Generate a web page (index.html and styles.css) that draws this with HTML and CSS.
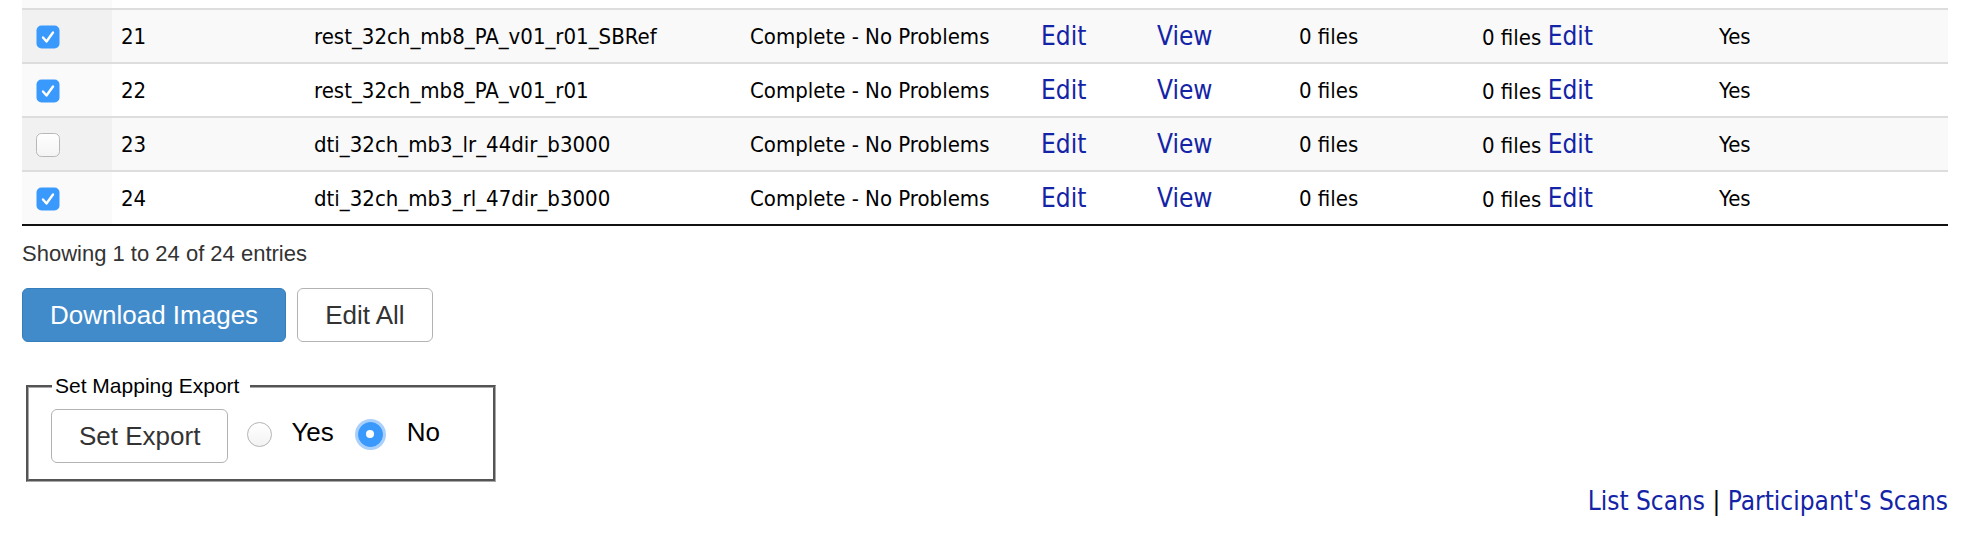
FILE: index.html
```html
<!DOCTYPE html>
<html>
<head>
<meta charset="utf-8">
<link rel="stylesheet" href="styles.css">
</head>
<body>
<div class="page">
  <table class="scans">
    <colgroup>
      <col class="c-check"><col class="c-num"><col class="c-name"><col class="c-status"><col class="c-edit"><col class="c-view"><col class="c-files"><col class="c-files2"><col class="c-yes">
    </colgroup>
    <tbody>
      <tr class="cut even"><td class="sorted"></td><td></td><td></td><td></td><td></td><td></td><td></td><td></td><td></td></tr>
      <tr class="odd">
        <td class="sorted"><span class="cb on"><svg viewBox="0 0 24 24" width="24" height="24"><rect x="0.5" y="0.5" width="23" height="23" rx="5" fill="#3a99fc"/><path d="M7 12.5 L10.5 16.5 L17 7.5" fill="none" stroke="#fff" stroke-width="2.4" stroke-linecap="round" stroke-linejoin="round"/></svg></span></td>
        <td>21</td><td>rest_32ch_mb8_PA_v01_r01_SBRef</td><td>Complete - No Problems</td>
        <td><a class="lnk" href="#">Edit</a></td><td><a class="lnk" href="#">View</a></td>
        <td>0 files</td><td>0 files <a class="lnk" href="#">Edit</a></td><td>Yes</td>
      </tr>
      <tr class="even">
        <td class="sorted"><span class="cb on"><svg viewBox="0 0 24 24" width="24" height="24"><rect x="0.5" y="0.5" width="23" height="23" rx="5" fill="#3a99fc"/><path d="M7 12.5 L10.5 16.5 L17 7.5" fill="none" stroke="#fff" stroke-width="2.4" stroke-linecap="round" stroke-linejoin="round"/></svg></span></td>
        <td>22</td><td>rest_32ch_mb8_PA_v01_r01</td><td>Complete - No Problems</td>
        <td><a class="lnk" href="#">Edit</a></td><td><a class="lnk" href="#">View</a></td>
        <td>0 files</td><td>0 files <a class="lnk" href="#">Edit</a></td><td>Yes</td>
      </tr>
      <tr class="odd">
        <td class="sorted"><span class="cb"><svg viewBox="0 0 24 24" width="24" height="24"><defs><linearGradient id="cbg" x1="0" y1="0" x2="0" y2="1"><stop offset="0" stop-color="#ffffff"/><stop offset="1" stop-color="#f4f4f4"/></linearGradient></defs><rect x="0.5" y="0.5" width="23" height="23" rx="5" fill="url(#cbg)" stroke="#b8b8b8" stroke-width="1"/></svg></span></td>
        <td>23</td><td>dti_32ch_mb3_lr_44dir_b3000</td><td>Complete - No Problems</td>
        <td><a class="lnk" href="#">Edit</a></td><td><a class="lnk" href="#">View</a></td>
        <td>0 files</td><td>0 files <a class="lnk" href="#">Edit</a></td><td>Yes</td>
      </tr>
      <tr class="even last">
        <td class="sorted"><span class="cb on"><svg viewBox="0 0 24 24" width="24" height="24"><rect x="0.5" y="0.5" width="23" height="23" rx="5" fill="#3a99fc"/><path d="M7 12.5 L10.5 16.5 L17 7.5" fill="none" stroke="#fff" stroke-width="2.4" stroke-linecap="round" stroke-linejoin="round"/></svg></span></td>
        <td>24</td><td>dti_32ch_mb3_rl_47dir_b3000</td><td>Complete - No Problems</td>
        <td><a class="lnk" href="#">Edit</a></td><td><a class="lnk" href="#">View</a></td>
        <td>0 files</td><td>0 files <a class="lnk" href="#">Edit</a></td><td>Yes</td>
      </tr>
    </tbody>
  </table>

  <div class="info">Showing 1 to 24 of 24 entries</div>

  <div class="actions">
    <button class="btn btn-primary" type="button">Download Images</button>
    <button class="btn" type="button">Edit All</button>
  </div>

  <fieldset class="mapping">
    <legend>Set Mapping Export</legend>
    <div class="mapping-row">
      <button class="btn" type="button">Set Export</button>
      <span class="radio"></span><span class="opt">Yes</span>
      <span class="radio on"><span class="dot"></span></span><span class="opt opt-no">No</span>
    </div>
  </fieldset>

  <div class="footer-links"><a class="lnk" href="#">List Scans</a> <span class="sep">|</span> <a class="lnk" href="#">Participant's Scans</a></div>
</div>
</body>
</html>
```
FILE: styles.css
```css
html, body { margin: 0; padding: 0; background: #fff; }
.page { padding-left: 22px; width: 1926px; }

.scans {
  width: 1926px;
  table-layout: fixed;
  border-collapse: separate;
  border-spacing: 0;
  border-bottom: 2px solid #111;
  font-family: "DejaVu Sans Condensed", "DejaVu Sans", sans-serif;
  font-stretch: condensed;
  font-size: 22px;
  color: #000;
}
.c-check { width: 90px; }
.c-num { width: 193px; }
.c-name { width: 436px; }
.c-status { width: 291px; }
.c-edit { width: 116px; }
.c-view { width: 142px; }
.c-files { width: 183px; }
.c-files2 { width: 237px; }
.c-yes { width: 238px; }

.scans td {
  height: 52px;
  padding: 0 0 0 9px;
  border-top: 2px solid #ddd;
  vertical-align: middle;
  white-space: nowrap;
  box-sizing: content-box;
}
.scans tr.cut td { height: 8px; border-top: 0; }
.scans tr.odd td { background: #f9f9f9; }
.scans tr.odd td.sorted { background: #f1f1f1; }
.scans tr.even td { background: #fff; }
.scans tr.even td.sorted { background: #fafafa; }
.scans td.sorted { padding-left: 14px; }

.cb { display: inline-block; width: 24px; height: 24px; vertical-align: middle; }
.cb svg { display: block; }

.lnk { color: #1424a6; text-decoration: none; font-size: 26px; }

.info {
  margin-top: 13px;
  font-family: "Liberation Sans", Arial, sans-serif;
  font-size: 22px;
  line-height: 30px;
  color: #333;
}

.actions { margin-top: 19px; display: flex; gap: 11px; }

.btn {
  font-family: "Liberation Sans", Arial, sans-serif;
  font-size: 26px;
  height: 54px;
  padding: 0 27px;
  border: 1px solid #b3b3b3;
  border-radius: 6px;
  background: #fff;
  color: #333;
  box-sizing: border-box;
}
.btn-primary { background: #428bca; border-color: #357ebd; color: #fff; }

.mapping {
  margin: 32px 0 0 4px;
  width: 470px;
  box-sizing: border-box;
  padding: 0 0 16px 22px;
  border: 3px groove #a8a8a8;
  font-family: "Liberation Sans", Arial, sans-serif;
}
.mapping legend {
  font-size: 21px;
  line-height: 24px;
  padding: 0 11px 0 3px;
  margin-left: 1px;
  color: #000;
}
.mapping-row { display: flex; align-items: center; margin-top: 11px; }
.radio {
  width: 25px; height: 25px; box-sizing: border-box;
  border: 1px solid #b4b4b4; border-radius: 50%;
  background: linear-gradient(#fff, #f3f3f3);
  margin-left: 19px;
  margin-bottom: 4px;
  display: flex; align-items: center; justify-content: center;
}
.radio.on {
  background: #3a99fc; border-color: #3a99fc;
  box-shadow: 0 0 0 3px #a9cffb;
  margin-left: 24px;
}
.radio .dot { width: 8px; height: 8px; border-radius: 50%; background: #fff; }
.opt { font-size: 26px; color: #000; margin-left: 19px; margin-bottom: 8px; }
.opt-no { margin-left: 24px; }

.footer-links {
  margin-top: 4px;
  text-align: right;
  font-family: "DejaVu Sans Condensed", "DejaVu Sans", sans-serif;
  font-stretch: condensed;
  font-size: 26px;
  color: #000;
}
```
